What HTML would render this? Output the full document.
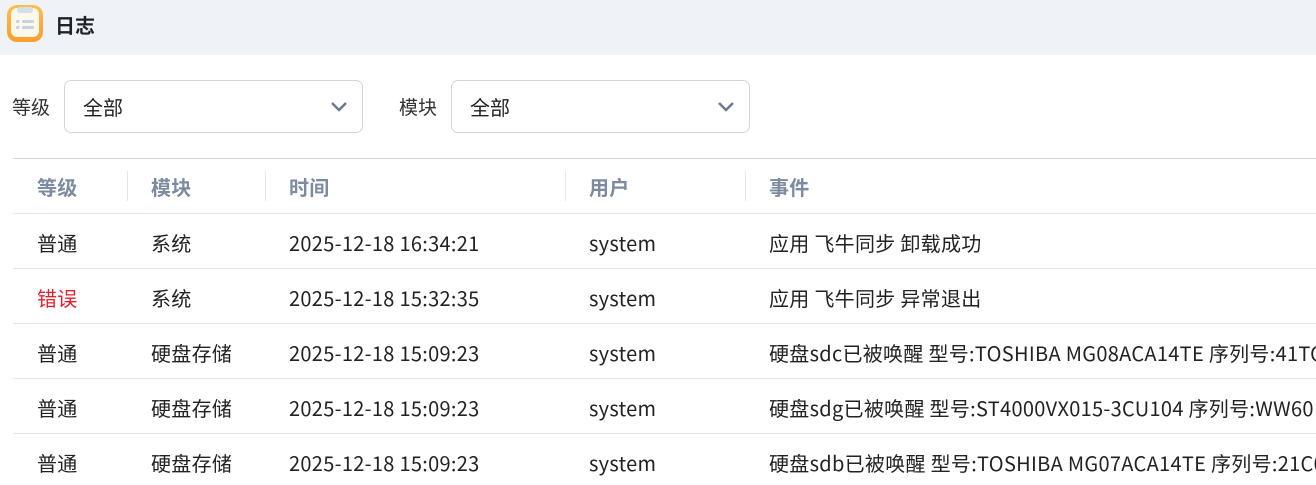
<!DOCTYPE html><html><head><meta charset="utf-8"><style>
body{margin:0;width:1316px;height:485px;overflow:hidden;background:#fff;font-family:"Noto Sans CJK SC","Liberation Sans",sans-serif;color:#222;}
.top{position:absolute;left:0;top:0;width:1316px;height:55px;background:#eff3f8;}
.title{position:absolute;left:55px;top:10px;font-size:20px;line-height:30px;font-weight:bold;color:#1f2328;}
.lbl{position:absolute;top:94px;font-size:19px;line-height:26px;color:#333;}
.sel{position:absolute;top:80px;width:299px;height:53px;border:1px solid #cfd6e0;border-radius:7px;box-sizing:border-box;}
.sel span{position:absolute;left:18px;top:13px;font-size:20px;line-height:26px;}
.sel svg{position:absolute;right:14px;top:20px;}
.hl{position:absolute;left:13px;right:0;height:1px;background:#e3e8ef;}
.c{position:absolute;font-size:20px;letter-spacing:.3px;line-height:26px;white-space:nowrap;}
.h{color:#7d8ba0;font-weight:bold;top:174px;}
.d{position:absolute;top:171px;width:1px;height:30px;background:#e3e8ef;}
</style></head><body>
<div class="top">
<svg style="position:absolute;left:7px;top:5px" width="36" height="37" viewBox="0 0 36 37"><defs><linearGradient id="g" x1="0" y1="0" x2="0" y2="1"><stop offset="0" stop-color="#ffbe4f"/><stop offset="1" stop-color="#fb9e2c"/></linearGradient></defs><rect x="0" y="0" width="36" height="37" rx="10" fill="url(#g)"/><rect x="4" y="3" width="28" height="29" rx="6" fill="#fff7ea"/><rect x="10" y="2" width="16" height="6" rx="3" fill="#d3e0ec"/><g fill="#c2d3e4"><rect x="9" y="15" width="3.5" height="3" rx="1"/><rect x="15" y="15" width="12" height="3" rx="1.5"/><rect x="9" y="21" width="3.5" height="3" rx="1"/><rect x="15" y="21" width="12" height="3" rx="1.5"/></g></svg>
<div class="title">日志</div></div>
<div class="lbl" style="left:12px">等级</div>
<div class="sel" style="left:64px"><span>全部</span><svg width="18" height="12"><path d="M2 2l7 7 7-7" stroke="#6b7a90" stroke-width="2.5" fill="none"/></svg></div>
<div class="lbl" style="left:399px">模块</div>
<div class="sel" style="left:451px"><span>全部</span><svg width="18" height="12"><path d="M2 2l7 7 7-7" stroke="#6b7a90" stroke-width="2.5" fill="none"/></svg></div>
<div class="hl" style="top:158px;background:#cfd6e0"></div>
<div class="c h" style="left:37px">等级</div><div class="d" style="left:127px"></div>
<div class="c h" style="left:151px">模块</div><div class="d" style="left:265px"></div>
<div class="c h" style="left:289px">时间</div><div class="d" style="left:565px"></div>
<div class="c h" style="left:589px">用户</div><div class="d" style="left:745px"></div>
<div class="c h" style="left:769px">事件</div>
<div class="hl" style="top:213px"></div><div class="hl" style="top:268px"></div><div class="hl" style="top:323px"></div><div class="hl" style="top:378px"></div><div class="hl" style="top:433px"></div>
<div class="c" style="left:37px;top:230px">普通</div><div class="c" style="left:151px;top:230px">系统</div><div class="c" style="left:289px;top:230px">2025-12-18 16:34:21</div><div class="c" style="left:589px;top:230px">system</div><div class="c" style="left:769px;top:230px">应用 飞牛同步 卸载成功</div>
<div class="c" style="left:37px;top:285px;color:#e5202e">错误</div><div class="c" style="left:151px;top:285px">系统</div><div class="c" style="left:289px;top:285px">2025-12-18 15:32:35</div><div class="c" style="left:589px;top:285px">system</div><div class="c" style="left:769px;top:285px">应用 飞牛同步 异常退出</div>
<div class="c" style="left:37px;top:340px">普通</div><div class="c" style="left:151px;top:340px">硬盘存储</div><div class="c" style="left:289px;top:340px">2025-12-18 15:09:23</div><div class="c" style="left:589px;top:340px">system</div><div class="c" style="left:769px;top:340px">硬盘sdc已被唤醒 型号:TOSHIBA MG08ACA14TE 序列号:41TC</div>
<div class="c" style="left:37px;top:395px">普通</div><div class="c" style="left:151px;top:395px">硬盘存储</div><div class="c" style="left:289px;top:395px">2025-12-18 15:09:23</div><div class="c" style="left:589px;top:395px">system</div><div class="c" style="left:769px;top:395px">硬盘sdg已被唤醒 型号:ST4000VX015-3CU104 序列号:WW60</div>
<div class="c" style="left:37px;top:450px">普通</div><div class="c" style="left:151px;top:450px">硬盘存储</div><div class="c" style="left:289px;top:450px">2025-12-18 15:09:23</div><div class="c" style="left:589px;top:450px">system</div><div class="c" style="left:769px;top:450px">硬盘sdb已被唤醒 型号:TOSHIBA MG07ACA14TE 序列号:21C0</div>
</body></html>
